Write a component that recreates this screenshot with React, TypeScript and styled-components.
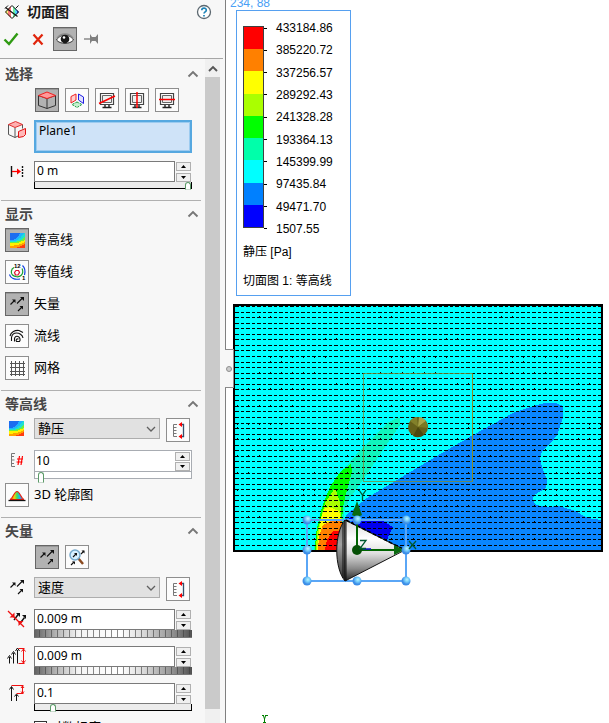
import React from "react";
import styled, { createGlobalStyle, css } from "styled-components";

const GlobalStyle = createGlobalStyle`
  * { box-sizing: border-box; }
  body {
    margin: 0;
    background: #fff;
    color: #000;
    font: 13px/16px "Noto Sans", "Noto Sans CJK SC", sans-serif;
  }
  button, input, select { font: inherit; color: inherit; margin: 0; border-radius: 0; }
`;

/* ---------- page frame ---------- */

const Page = styled.div`
  display: flex;
  height: 100vh;
  overflow: hidden;
`;

const Sidebar = styled.aside`
  display: flex;
  flex-direction: column;
  flex: 0 0 226px;
  background: #f7f7f7;
  border-right: 1px solid #808080;
`;

const TitleBar = styled.header`
  display: flex;
  align-items: center;
  gap: 7px;
  height: 24px;
  padding: 0 13px 0 4px;
`;

const Title = styled.h1`
  flex: 1;
  margin: 0;
  font-size: 14px;
  font-weight: 700;
  line-height: 24px;
  color: #1c1c1c;
`;

const GhostButton = styled.button`
  display: grid;
  place-items: center;
  width: 22px;
  height: 24px;
  padding: 0;
  border: 0;
  background: none;
`;

const HelpButton = styled(GhostButton)`
  width: 16px;
  height: 16px;
`;

const Actions = styled.div`
  display: flex;
  gap: 4px;
  padding: 3px 0 7px 1px;
  margin-right: 2px;
  border-bottom: 1px solid #a6a6a6;
`;

const Scroller = styled.div`
  display: flex;
  flex: 1;
  min-height: 0;
  padding-right: 5px;
`;

const Sections = styled.div`
  flex: 1;
  min-width: 0;
  overflow: hidden;
`;

const ScrollTrack = styled.div`
  display: flex;
  flex-direction: column;
  flex: 0 0 15px;
  padding: 1px 0 14px;
  background: #f0f0f0;
`;

const ScrollUp = styled(GhostButton)`
  width: 15px;
  height: 17px;
`;

const ScrollThumb = styled.div`
  flex: 1;
  background: #cacaca;
`;

/* ---------- property sections ---------- */

const SectionBox = styled.section<{ $first?: boolean }>`
  margin: 0 4px 0 1px;
  padding: ${(p) => (p.$first ? "2px 0 10px" : "0 0 10px")};
  border-top: ${(p) => (p.$first ? "0" : "1px solid #b0b0b0")};
`;

const SectionHead = styled.div`
  display: flex;
  align-items: center;
  justify-content: space-between;
  height: 27px;
  padding: 0 0 2px 4px;
`;

const SectionTitle = styled.h2`
  margin: 0;
  font-size: 14px;
  line-height: 20px;
  font-weight: 700;
  color: #474747;
`;

const CollapseButton = styled(GhostButton)`
  width: 16px;
  height: 16px;
`;

const Rows = styled.div<{ $gap?: number }>`
  display: flex;
  flex-direction: column;
  gap: ${(p) => p.$gap ?? 8}px;
`;

const Row = styled.div`
  display: grid;
  grid-template-columns: 33px 158px;
  align-items: start;
`;

const Lead = styled.span`
  display: grid;
  place-items: center;
  height: 20px;
  padding-right: 2px;
`;

const ButtonStrip = styled.div<{ $gap: number }>`
  display: flex;
  gap: ${(p) => p.$gap}px;
  padding-left: 1px;
`;

const ToolButton = styled.button<{ $on?: boolean }>`
  display: grid;
  place-items: center;
  flex: none;
  width: 24px;
  height: 24px;
  padding: 0;
  border: 1px solid #8e8e8e;
  background: #fcfcfc;
  ${(p) =>
    p.$on &&
    css`
      background: #b2b2b2;
      border-color: #666;
      box-shadow: inset 0 1px 0 #989898;
    `}
`;

const ToggleLine = styled.label`
  display: flex;
  align-items: center;
  gap: 5px;
  padding-left: 4px;
  height: 24px;
`;

const ToggleText = styled.span`
  padding-bottom: 2px;
`;

const SelectionList = styled.select`
  height: 33px;
  width: 100%;
  padding: 0 0 0 1px;
  border: 2px solid #56a8e0;
  box-shadow: inset 0 0 0 1px #9ccbf0;
  outline: 0;
  background: #cfe3f8;
  font-size: 12px;
  overflow: hidden;
  appearance: none;
  &::-webkit-scrollbar { display: none; }
  option { padding: 0 2px; line-height: 14px; background: none; color: #000; }
`;

const Combo = styled.div`
  position: relative;
  width: 126px;
  svg { position: absolute; right: 4px; top: 6px; pointer-events: none; }
`;

const ComboSelect = styled.select`
  display: block;
  width: 100%;
  height: 21px;
  padding: 0 18px 1px 3px;
  border: 1px solid #adadad;
  background: #e1e1e1;
  line-height: 18px;
  appearance: none;
`;

const ComboRow = styled.div`
  display: flex;
  justify-content: space-between;
  padding-right: 2px;
  height: 24px;
`;

const Numeric = styled.div<{ $joined?: boolean }>`
  display: grid;
  grid-template-columns: 1fr 17px;
  grid-template-rows: 21px 8px;
  ${(p) =>
    p.$joined &&
    css`
      border: 1px solid #a8acb2;
      grid-template-rows: 20px 7px;
      background: #fff;
    `}
`;

const NumberBox = styled.input<{ $joined?: boolean }>`
  width: 100%;
  height: 100%;
  min-width: 0;
  padding: ${(p) => (p.$joined ? "0 1px 2px" : "0 2px 3px")};
  font-size: 12px;
  outline: 0;
  background: #fff;
  border: ${(p) => (p.$joined ? "0" : "1px solid #7a7a7a")};
`;

const Spinner = styled.div`
  display: grid;
  gap: 1px;
  padding: 1px 1px 0;
`;

const SpinButton = styled.button`
  display: grid;
  place-items: center;
  padding: 0;
  min-height: 0;
  height: 9px;
  border: 1px solid #b0b0b0;
  background: #f0f0f0;
`;

const Slider = styled.input<{ $joined?: boolean }>`
  grid-column: 1 / -1;
  appearance: none;
  width: 100%;
  height: ${(p) => (p.$joined ? "9px" : "7px")};
  outline: 0;
  background: ${(p) => (p.$joined ? "transparent" : "#ececec")};
  border: 0 solid ${(p) => (p.$joined ? "#a8acb2" : "#000")};
  border-width: ${(p) => (p.$joined ? "1px 0 0" : "0 1px 1px")};
  &::-webkit-slider-thumb {
    appearance: none;
    width: 6px;
    height: ${(p) => (p.$joined ? "11px" : "8px")};
    margin-top: 2px;
    border: 1px solid #5b9a68;
    border-bottom-color: #c8d8cc;
    border-radius: 3px 3px 1px 1px;
    background: #fff;
  }
`;

const Wheel = styled.input`
  grid-column: 1 / -1;
  appearance: none;
  width: 100%;
  height: 8px;
  outline: 0;
  background:
    repeating-linear-gradient(90deg, transparent 0 5px, rgba(60, 60, 60, 0.6) 5px 6px),
    linear-gradient(90deg, #606060, #b4b4b4 14%, #f4f4f4 28%, #fff 55%, #d8d8d8 70%, #909090 88%, #505050);
  border-bottom: 1px solid #777;
  &::-webkit-slider-thumb { appearance: none; width: 1px; height: 1px; opacity: 0; }
`;

const CheckLine = styled.label`
  display: flex;
  gap: 2px;
  align-items: flex-start;
  line-height: 14px;
`;

const CheckBox = styled.input`
  appearance: none;
  width: 13px;
  height: 13px;
  margin-top: 1px;
  border: 1px solid #333;
  background: #fff;
`;

/* ---------- graphics area ---------- */

const Viewport = styled.main`
  position: relative;
  flex: 1;
  min-width: 0;
  background: #fff;
  font-family: "Liberation Sans", "Noto Sans CJK SC", sans-serif;
  font-size: 12px;
`;

const Coordinates = styled.div`
  display: flex;
  align-items: flex-end;
  height: 10px;
  padding-left: 4px;
  line-height: 14px;
  color: #4a9ff5;
`;

const LegendCard = styled.section`
  width: 115px;
  margin: 0 0 4px 10px;
  padding: 9px 6px 5px;
  border: 1px solid #56a0f0;
`;

const Scale = styled.div`
  display: flex;
`;

const ColorBar = styled.div`
  display: flex;
  flex-direction: column;
  width: 21px;
  margin: 6px 0 9px;
  border: 1px solid #404040;
`;

const Swatch = styled.span<{ $color: string }>`
  flex: 1;
  background: ${(p) => p.$color};
`;

const ScaleValues = styled.ol`
  display: flex;
  flex-direction: column;
  justify-content: space-between;
  height: 217px;
  margin: 0;
  padding: 0;
  list-style: none;
`;

const ScaleValue = styled.li`
  display: flex;
  align-items: center;
  gap: 9px;
  line-height: 16px;
  &::before { content: ""; width: 3px; height: 1px; background: #000; }
`;

const LegendText = styled.p<{ $top: number }>`
  margin: ${(p) => p.$top}px 0 0;
  line-height: 18px;
  white-space: nowrap;
`;

const Scene = styled.svg`
  display: block;
  width: 100%;
  height: auto;
`;

const SplitHandle = styled.button`
  position: absolute;
  left: -1px;
  top: 349px;
  display: grid;
  place-items: center;
  width: 9px;
  height: 39px;
  padding: 0;
  border: 1px solid #8a8a8a;
  border-left: 0;
  background: #f7f7f7;
`;

const Knob = styled.span`
  width: 6px;
  height: 6px;
  border: 1px solid #8f8f8f;
  border-radius: 50%;
  background: #ccc;
`;

/* ---------- icons ---------- */

type IconProps = { size?: number; box?: number; crisp?: boolean; children: React.ReactNode };
const Icon = ({ size = 20, box = 20, crisp, children }: IconProps) => (
  <svg
    width={size}
    height={size}
    viewBox={`0 0 ${box} ${box}`}
    fill="none"
    stroke="#111"
    shapeRendering={crisp ? "crispEdges" : undefined}
    aria-hidden="true"
  >
    {children}
  </svg>
);

const CutPlotIcon = () => (
  <Icon size={16} box={16}>
    <defs>
      <clipPath id="cutDiamond">
        <path d="M8 1 15 8 8 15 1 8Z" />
      </clipPath>
    </defs>
    <g clipPath="url(#cutDiamond)" stroke="none">
      <rect width="5" height="16" fill="#fff27a" />
      <rect x="4" width="3" height="16" fill="#ff7878" />
      <rect x="7" width="2" height="16" fill="#ffffff" />
      <rect x="9" width="2" height="16" fill="#70f0a0" />
      <rect x="11" width="2" height="16" fill="#50d8ff" />
      <rect x="13" width="3" height="16" fill="#2a50ff" />
    </g>
    <path d="M8 1.500 14.500 8 8 14.500 1.500 8Z" strokeWidth="1" />
    <path d="M1.500 3.500 13.500 12.500" strokeWidth="1.200" />
    <path d="M1 4.500 4 1.500M11.500 4.500 14.500 1.500" strokeWidth="1" />
  </Icon>
);

const HelpIcon = () => (
  <Icon size={16} box={16}>
    <circle cx="8" cy="8" r="6.500" fill="#fff" stroke="#5c6870" strokeWidth="1.300" />
    <path d="M5.800 6.300C5.800 3.500 10.300 3.500 10.300 6.200 10.300 7.800 8 7.900 8 9.600M8 11v1.500" stroke="#1e84b8" strokeWidth="1.700" />
  </Icon>
);

const CheckIcon = () => (
  <Icon>
    <path d="M2.500 10.500 7 15 15.500 4.500" stroke="#2f9a12" strokeWidth="2.400" />
  </Icon>
);

const CrossIcon = () => (
  <Icon>
    <path d="M5.500 5.500l9 10M14.500 5.500l-9 10" stroke="#e0250c" strokeWidth="2.200" />
  </Icon>
);

const EyeIcon = () => (
  <Icon>
    <path d="M1.500 11C5 4.500 15 4.500 18.500 11 15 15.500 5 15.500 1.500 11Z" fill="#fff" stroke="#333" strokeWidth="1" />
    <path d="M2 9.500C5.500 3.500 14.500 3.500 18 9.500" stroke="#8a8a8a" strokeWidth="1.500" />
    <circle cx="10" cy="10" r="4.300" fill="#181818" stroke="none" />
    <circle cx="9" cy="8.500" r="1.300" fill="#fff" stroke="none" />
  </Icon>
);

const PinIcon = () => (
  <Icon>
    <path d="M2 10h6" stroke="#8a8a8a" strokeWidth="1.500" />
    <path d="M8 5 10 8h3.500L16 5v10L13.500 12H10L8 15Z" fill="#808080" stroke="none" />
  </Icon>
);

const ChevronUp = ({ thin }: { thin?: boolean }) => (
  <Icon size={12} box={12}>
    <path d={thin ? "M2 8 6 4l4 4" : "M1.500 8.500 6 4l4.500 4.500"} stroke={thin ? "#555" : "#777"} strokeWidth="1.900" />
  </Icon>
);

const ChevronDown = () => (
  <Icon size={10} box={10}>
    <path d="M1 3l4 4 4-4" stroke="#606060" strokeWidth="1.300" />
  </Icon>
);

const CubeIcon = () => (
  <Icon>
    <path d="M1.500 5.500v10L10 18.500l8.500-3v-10L10 8.500Z" stroke="#333" />
    <path d="M10 8.500v10" stroke="#333" />
    <path d="M10 2l8.500 3.500L10 8.500 1.500 5.500Z" fill="#ff9a9a" stroke="#f02020" />
  </Icon>
);

const PlanesIcon = () => (
  <Icon>
    <path d="M9 4 4 6.500v6.500l5-3Z" fill="#ffd0d0" stroke="#f02020" />
    <path d="M11.500 4 16.500 7v6.500l-5-3.500Z" fill="#e0e0ff" stroke="#2020e0" />
    <path d="M10 12 15 14.500l-5 3-5-3Z" fill="#c8f0d0" stroke="#1e9a40" strokeDasharray="2 1" />
  </Icon>
);

const MonitorIcon = ({ cut }: { cut: string }) => (
  <Icon>
    <path d="M3.500 3.500h13v11h-13Z" stroke="#444" strokeWidth="1.200" />
    <path d="M5.500 5.500h9v7h-9Z" stroke="#666" fill="#eef0f0" />
    <path d="M8 15v2M12 15v2M5.500 17.500h9" stroke="#222" strokeWidth="1.400" />
    <path d={cut} stroke="#f00" strokeWidth="1.500" />
  </Icon>
);

const FaceIcon = () => (
  <Icon>
    <path d="M1.500 4.500v10l6.500 3 3-1.500M8 7.500v10M15.500 4.500v4" stroke="#555" />
    <path d="M8.500 1.500 15.500 4.500 8 7.500 1.500 4.500Z" fill="#ffb0b0" stroke="#e03030" />
    <path d="M11.500 11.500 18.500 8.500v6L16.500 16.500 11.500 17.500Z" fill="#ffb8b8" stroke="#e01010" />
  </Icon>
);

const OffsetIcon = () => (
  <Icon>
    <path d="M4.500 5v11" strokeWidth="1.400" />
    <path d="M15.500 5v11" strokeWidth="1.400" strokeDasharray="2 1" />
    <path d="M5 10.500h6" stroke="#f00" strokeWidth="1.300" />
    <path d="M10 7.500l4 3-4 3Z" fill="#f00" stroke="none" />
  </Icon>
);

const ContourIcon = () => (
  <Icon size={15} box={15} crisp>
    <g stroke="none">
      <rect width="15" height="15" fill="#1c6cf0" />
      <path d="M0 7C5 7 9 5 10 0h5v15H0Z" fill="#1fb4ff" />
      <path d="M0 8.500C6 8.500 11 6 13 1l2-1v15H0Z" fill="#20e0d0" />
      <path d="M0 9.500C6 9.500 11 8 15 4v11H0Z" fill="#6cf040" />
      <path d="M0 10.500C6 10.500 11 9.500 15 7v8H0Z" fill="#fff000" />
      <path d="M0 13C6 13 11 11.500 15 9v6H0Z" fill="#ffa000" />
      <path d="M5 15c4-1 7-2 10-4v4Z" fill="#ff3c10" />
    </g>
  </Icon>
);

const IsolineIcon = () => (
  <Icon>
    <path d="M7.500 10.500 9 8.500h2.500L12.500 10.500 11 13H8.500Z" stroke="#e01030" strokeWidth="1.200" />
    <path d="M7 5.500C4 7 3.500 11 5.500 13s6.500 2.500 8.500.5 2-5 1-7" stroke="#18a030" strokeWidth="1.200" />
    <path d="M2.500 12.500C3.500 16 7.500 18 13 17M15.500 3.500C18 6 18.500 9.500 17.500 13" stroke="#1040e0" strokeWidth="1.200" />
    <g fill="#000" stroke="none" fontFamily="Liberation Sans" fontSize="6" fontWeight="700">
      <text x="7" y="6">12</text>
      <text x="15" y="18">1</text>
    </g>
  </Icon>
);

const VectorIcon = () => (
  <Icon>
    <path d="M3.500 10.500 7.500 6.500M10 9.500 15.500 4M11 17 15 13" strokeWidth="1.100" />
    <path d="M5 5.500h3.500V9ZM13 3h4v4ZM12.500 12H16v3.500Z" fill="#111" stroke="none" />
  </Icon>
);

const StreamIcon = () => (
  <Icon>
    <path d="M4.500 15V11.500C5 8.500 7 7 9.500 7s6 1.500 6.500 5" strokeWidth="1.100" />
    <path d="M7.500 15.500V12.500C8 10.500 9.500 10 11 10.500s3 3 1.500 5H9.500C8.500 14 9.500 12.500 11.500 13" strokeWidth="1.100" />
    <path d="M3 10C4 6 8 4 12 4.500L16 6.500" strokeWidth="1.100" />
  </Icon>
);

const GridIcon = () => (
  <Icon crisp>
    <path d="M4.500 3v15M8.500 3v15M12.500 3v15M16.500 3v15M3 5.500h15M3 9.500h15M3 13.500h15M3 16.500h15" stroke="#555" />
  </Icon>
);

const RangeIcon = () => (
  <Icon>
    <path d="M9 4.500H5.500v12H9M5.500 7.500h3M5.500 10.500h3M5.500 13.500h3" stroke="#777" />
    <path d="M12.500 4.500h3v12h-3" stroke="#33506c" strokeWidth="1.300" />
    <path d="M14 2v5l-3.500-2.500ZM14 14v5l-3.500-2.500Z" fill="#f00" stroke="none" />
  </Icon>
);

const LevelsIcon = () => (
  <Icon>
    <path d="M8 3.500H4.500v13H8M4.500 6.500h2.500M4.500 10h3M4.500 13.500h2.500" stroke="#777" />
    <path d="M12.500 6 11 15M15.500 6 14 15M10 9h6M9.500 12h6" stroke="#f00" strokeWidth="1.200" />
  </Icon>
);

const ProfileIcon = () => (
  <Icon>
    <defs>
      <linearGradient id="profileFill" x1="0" x2="1">
        <stop offset="0" stopColor="#f02010" />
        <stop offset=".3" stopColor="#ffd000" />
        <stop offset=".5" stopColor="#40e060" />
        <stop offset=".7" stopColor="#20b0ff" />
        <stop offset="1" stopColor="#f02010" />
      </linearGradient>
    </defs>
    <path d="M3 14.500C6.500 13 7 6.500 10 6.500S13.500 13 17 14.500Z" fill="url(#profileFill)" stroke="#e82010" strokeWidth="1.100" />
    <path d="M1.500 15.500h17" strokeWidth="1.300" />
  </Icon>
);

const VectorSearchIcon = () => (
  <Icon>
    <path d="M11 11l5 6" stroke="#8a4a20" strokeWidth="2.500" />
    <circle cx="8" cy="8" r="5" fill="#d8f0ff" stroke="#74a8cc" strokeWidth="1.500" />
    <path d="M6 10l3-3M14 7l3-3M4 18l3-3" strokeWidth="1.100" />
    <path d="M7 6H10v3ZM14.500 3.500H17.500v3ZM5 14.500h3v3Z" fill="#111" stroke="none" />
  </Icon>
);

const SpacingIcon = () => (
  <Icon>
    <path d="M7 11 11.500 5M12.500 15 17.500 8.500" strokeWidth="1.400" />
    <path d="M9 4h4v4ZM15 6h4v4Z" fill="#111" stroke="none" />
    <path d="M1 2 17 18" stroke="#f01010" strokeWidth="1.300" />
    <path d="M7.500 3.500V8.500H2.500ZM11.500 17v-5H16.500Z" fill="#f01010" stroke="none" />
  </Icon>
);

const SizeMaxIcon = () => (
  <Icon>
    <path d="M2.500 17.500V11M6.500 17.500V7M10.500 17.500V4" />
    <path d="M.5 12.500 2.500 9.500l2 3M4.500 8.500l2-3 2 3M8.500 5l2-3 2 3" />
    <path d="M11.500 2.500h6M11.500 17.500h6M16.500 3v14M14.500 5.500l2-2.500 2 2.500M14.500 14.500l2 2.500 2-2.500" stroke="#f01010" />
  </Icon>
);

const SizeMinIcon = () => (
  <Icon>
    <path d="M4.500 18V4M9.500 18v-6" />
    <path d="M2.500 6.500l2-3 2 3M7.500 13.500l2-2.500 2 2.500" />
    <path d="M4.500 2.500h12M9.500 10.500h7M15.500 3v7M14 5l1.500-2L17 5M14 8.500l1.500 2 1.500-2" stroke="#f01010" />
  </Icon>
);

const Triangle = ({ down }: { down?: boolean }) => (
  <svg width="5" height="3" viewBox="0 0 5 3" aria-hidden="true">
    <path d={down ? "M0 0h5L2.500 3Z" : "M0 3h5L2.500 0Z"} />
  </svg>
);

/* ---------- composed controls ---------- */

const Section = ({ title, first, children }: { title: string; first?: boolean; children: React.ReactNode }) => (
  <SectionBox $first={first}>
    <SectionHead>
      <SectionTitle>{title}</SectionTitle>
      <CollapseButton aria-label={`折叠 ${title}`}>
        <ChevronUp />
      </CollapseButton>
    </SectionHead>
    {children}
  </SectionBox>
);

type NumericProps = { label: string; value: string; joined?: boolean; wheel?: boolean; position?: number };
const NumericField = ({ label, value, joined, wheel, position = 0 }: NumericProps) => (
  <Numeric $joined={joined}>
    <NumberBox $joined={joined} aria-label={label} defaultValue={value} />
    <Spinner>
      <SpinButton aria-label={`${label} +`}><Triangle /></SpinButton>
      <SpinButton aria-label={`${label} -`}><Triangle down /></SpinButton>
    </Spinner>
    {wheel ? (
      <Wheel type="range" aria-label={`${label} 滚轮`} />
    ) : (
      <Slider $joined={joined} type="range" defaultValue={position} aria-label={`${label} 滑块`} />
    )}
  </Numeric>
);

const ComboField = ({ label, value }: { label: string; value: string }) => (
  <ComboRow>
    <Combo>
      <ComboSelect aria-label={label} defaultValue={value}>
        <option>{value}</option>
      </ComboSelect>
      <ChevronDown />
    </Combo>
    <ToolButton aria-label={`${label} 范围`}><RangeIcon /></ToolButton>
  </ComboRow>
);

const Toggle = ({ label, on, icon }: { label: string; on?: boolean; icon: React.ReactNode }) => (
  <ToggleLine>
    <ToolButton $on={on} aria-pressed={!!on}>{icon}</ToolButton>
    <ToggleText>{label}</ToggleText>
  </ToggleLine>
);

/* ---------- flow field drawing ---------- */

const legend = [
  "433184.86", "385220.72", "337256.57", "289292.43", "241328.28",
  "193364.13", "145399.99", "97435.84", "49471.70", "1507.55",
];
const bands = ["#ff0000", "#ff8000", "#ffff00", "#aaff00", "#00ff00", "#00ffaa", "#00ffff", "#0080ff", "#0000ff"];

const columnX = (col: number) => Math.round(235 + col * 5.5);

const buildVectors = () => {
  let d = "";
  for (let row = 0; row < 45; row++) {
    const y = Math.round(306 + row * 5.55);
    for (let col = 0; col < 67; col++) {
      const x = columnX(col);
      const length = columnX(col + 1) - x - 2;
      d += `M${x} ${y}h${length}v1h-${length}z`;
      const dense = row % 3 === 0 && row > 8;
      const hash = (row * 7 + col * 5) % 11;
      if ((dense && col % 2 === 0 && hash < 6) || (row % 4 === 2 && col % 2 === 0 && hash < 2)) {
        d += `M${x + 2} ${y + (row % 4 === 1 ? 1 : -1)}h1v1h-1z`;
      }
    }
  }
  return d;
};
const vectors = buildVectors();

const handles: [number, number][] = [
  [307, 520], [357, 520], [406, 520], [307, 550], [406, 550], [307, 581], [357, 581], [406, 581],
];

const FlowScene = () => (
  <Scene viewBox="226 300 383 423" role="img" aria-label="静压切面图">
    <defs>
      <linearGradient id="cone" x1="0" y1="0" x2="0" y2="1">
        <stop offset="0" stopColor="#d8d8d8" />
        <stop offset=".3" stopColor="#fff" />
        <stop offset=".55" stopColor="#dedede" />
        <stop offset=".8" stopColor="#888" />
        <stop offset="1" stopColor="#222" />
      </linearGradient>
      <linearGradient id="cap" x1="0" y1="0" x2="0" y2="1">
        <stop offset="0" stopColor="#777" />
        <stop offset=".4" stopColor="#a0a0a0" />
        <stop offset="1" stopColor="#333" />
      </linearGradient>
      <radialGradient id="handle" cx=".6" cy=".35">
        <stop offset="0" stopColor="#b8f4ff" />
        <stop offset=".5" stopColor="#74ccfa" />
        <stop offset="1" stopColor="#3c8ee8" />
      </radialGradient>
    </defs>

    <rect x="234" y="305" width="368" height="246" fill="#00ffff" />
    <g shapeRendering="crispEdges">
      <path fill="#0a86ff" d="M345 520 347 514 367 498 397 480 430 460 473 435 513 413 533 406 545 403H556L563 406V418L557 435 551 443 543 450 540 457 542 467 547 480 546 488 534 495 533 500 536 505 547 507 558 506 573 510 588 518 601 520V550H400Z" />
      <path fill="#10f4bc" d="M314 550 318 520 327 497 343 470 363 447 387 423 397 418H400V425L383 450 363 480 350 498 344 512 344 550Z" />
      <path fill="#00ff00" d="M315 550 316 533 322 507 330 487 340 472 351 464 352 472 347 490 343 507 342 522V550Z" />
      <path fill="#aaff00" d="M316 550 317 533 325 503 335 488 340 502 342 522V550Z" />
      <path fill="#ffff00" d="M317 550 320 522 324 509 329 507 339 511 342 524V550Z" />
      <path fill="#ff8000" d="M318 550 319 537 323 525 331 521H342V550Z" />
      <path fill="#ff0000" d="M325 550 327 540 333 531H342V550Z" />
      <path fill="#0000f0" d="M348 518 352 517 358 521H383L393 527 390 533 387 540 357 526Z" />
      <path fill="#000" d={vectors} />
      <path d="M363.500 373.500H472.500V481.500H363.500Z" fill="none" stroke="#7f8a30" strokeOpacity=".75" />
      <path d="M472.500 374V481" stroke="#8a8c20" />
      <rect x="234" y="305" width="368" height="246" fill="none" stroke="#000" strokeWidth="2" />
    </g>

    <circle cx="418" cy="427" r="10" fill="#65601a" />
    <path d="M418 427 410 421A10 10 0 0 1 417 417Z" fill="#82802a" />
    <path d="M418 427 419 417A10 10 0 0 1 426 421Z" fill="#a8a44a" />
    <path d="M418 427 426 421A10 10 0 0 1 428 428Z" fill="#7c7824" />
    <path d="M418 427 424 435A10 10 0 0 1 413 436Z" fill="#4c470e" />

    <path d="M307 520H406V581H307Z" fill="none" stroke="#5aa6f6" strokeWidth="2" />
    <path d="M345 520C334 533 334 568 345 581Z" fill="url(#cap)" stroke="#111" />
    <path d="M345 520 405 550 345 581Z" fill="url(#cone)" stroke="#111" />
    <path d="M343 523V578M346 520V581" stroke="#111" />
    <path d="M346 520 405 550" stroke="#000" strokeDasharray="4 2" strokeWidth="1.500" />

    <path d="M357 550V514M357 550H396" stroke="#006400" strokeWidth="2" />
    <path d="M357 501 362 515Q357 518 352 515Z" fill="#0a6a10" />
    <path d="M404 550 394 545V555Z" fill="#0a6a10" />
    <path d="M363 549H371" stroke="#1010d0" strokeWidth="1.500" />
    <circle cx="357" cy="550" r="5" fill="#065006" />
    {handles.map(([x, y]) => (
      <circle key={`${x}-${y}`} cx={x} cy={y} r="4.500" fill="url(#handle)" />
    ))}
    <g fill="none" stroke="#005a30" strokeWidth="1.300">
      <path d="M359 490l3.500 5 3.500-5M362.500 495v5" />
      <path d="M360 540.500h6l-6 8h6" />
      <path d="M409 541l7 8M416 541l-7 8" />
    </g>
    <path d="M262 715.500h2M265 715.500h3M263.500 716l1 3 1-3M264.500 719v3M263 722.500h3" fill="none" stroke="#008000" />
  </Scene>
);

/* ---------- page ---------- */

export default function App() {
  return (
    <>
      <GlobalStyle />
      <Page>
        <Sidebar>
          <TitleBar>
            <CutPlotIcon />
            <Title>切面图</Title>
            <HelpButton aria-label="帮助"><HelpIcon /></HelpButton>
          </TitleBar>
          <Actions>
            <GhostButton aria-label="确定"><CheckIcon /></GhostButton>
            <GhostButton aria-label="取消"><CrossIcon /></GhostButton>
            <ToolButton $on aria-label="预览"><EyeIcon /></ToolButton>
            <GhostButton aria-label="固定"><PinIcon /></GhostButton>
          </Actions>
          <Scroller>
            <Sections>
              <Section title="选择" first>
                <Rows>
                  <Row>
                    <span />
                    <ButtonStrip $gap={6}>
                      <ToolButton $on aria-label="参考"><CubeIcon /></ToolButton>
                      <ToolButton aria-label="XYZ 平面"><PlanesIcon /></ToolButton>
                      <ToolButton aria-label="斜切"><MonitorIcon cut="M2 13.500 18 6" /></ToolButton>
                      <ToolButton aria-label="竖切"><MonitorIcon cut="M10 2v16" /></ToolButton>
                      <ToolButton aria-label="横切"><MonitorIcon cut="M2 9.500h16" /></ToolButton>
                    </ButtonStrip>
                  </Row>
                  <Row>
                    <Lead><FaceIcon /></Lead>
                    <SelectionList size={2} aria-label="切面参考">
                      <option>Plane1</option>
                    </SelectionList>
                  </Row>
                  <Row>
                    <Lead><OffsetIcon /></Lead>
                    <NumericField label="偏移" value="0 m" position={100} />
                  </Row>
                </Rows>
              </Section>

              <Section title="显示">
                <Rows>
                  <Toggle on label="等高线" icon={<ContourIcon />} />
                  <Toggle label="等值线" icon={<IsolineIcon />} />
                  <Toggle on label="矢量" icon={<VectorIcon />} />
                  <Toggle label="流线" icon={<StreamIcon />} />
                  <Toggle label="网格" icon={<GridIcon />} />
                </Rows>
              </Section>

              <Section title="等高线">
                <Rows $gap={4}>
                  <Rows>
                    <Row>
                      <Lead><ContourIcon /></Lead>
                      <ComboField label="参数" value="静压" />
                    </Row>
                    <Row>
                      <Lead><LevelsIcon /></Lead>
                      <NumericField label="级别数" value="10" joined position={2} />
                    </Row>
                  </Rows>
                  <Toggle label="3D 轮廓图" icon={<ProfileIcon />} />
                </Rows>
              </Section>

              <Section title="矢量">
                <Rows>
                  <Row>
                    <span />
                    <ButtonStrip $gap={6}>
                      <ToolButton $on aria-label="静态矢量"><VectorIcon /></ToolButton>
                      <ToolButton aria-label="动态矢量"><VectorSearchIcon /></ToolButton>
                    </ButtonStrip>
                  </Row>
                  <Row>
                    <Lead><VectorIcon /></Lead>
                    <ComboField label="矢量参数" value="速度" />
                  </Row>
                  <Row>
                    <Lead><SpacingIcon /></Lead>
                    <NumericField label="间距" value="0.009 m" wheel />
                  </Row>
                  <Row>
                    <Lead><SizeMaxIcon /></Lead>
                    <NumericField label="最大箭头" value="0.009 m" wheel />
                  </Row>
                  <Row>
                    <Lead><SizeMinIcon /></Lead>
                    <NumericField label="最小/最大比" value="0.1" position={10} />
                  </Row>
                  <Row>
                    <span />
                    <CheckLine>
                      <CheckBox type="checkbox" />
                      对数标度
                    </CheckLine>
                  </Row>
                </Rows>
              </Section>
            </Sections>
            <ScrollTrack>
              <ScrollUp aria-label="向上滚动"><ChevronUp thin /></ScrollUp>
              <ScrollThumb />
            </ScrollTrack>
          </Scroller>
        </Sidebar>

        <Viewport>
          <Coordinates>234, 88</Coordinates>
          <LegendCard>
            <Scale>
              <ColorBar>
                {bands.map((c) => <Swatch key={c} $color={c} />)}
              </ColorBar>
              <ScaleValues>
                {legend.map((v) => <ScaleValue key={v}>{v}</ScaleValue>)}
              </ScaleValues>
            </Scale>
            <LegendText $top={6}>静压 [Pa]</LegendText>
            <LegendText $top={11}>切面图 1: 等高线</LegendText>
          </LegendCard>
          <FlowScene />
          <SplitHandle aria-label="展开或收起面板"><Knob /></SplitHandle>
        </Viewport>
      </Page>
    </>
  );
}
